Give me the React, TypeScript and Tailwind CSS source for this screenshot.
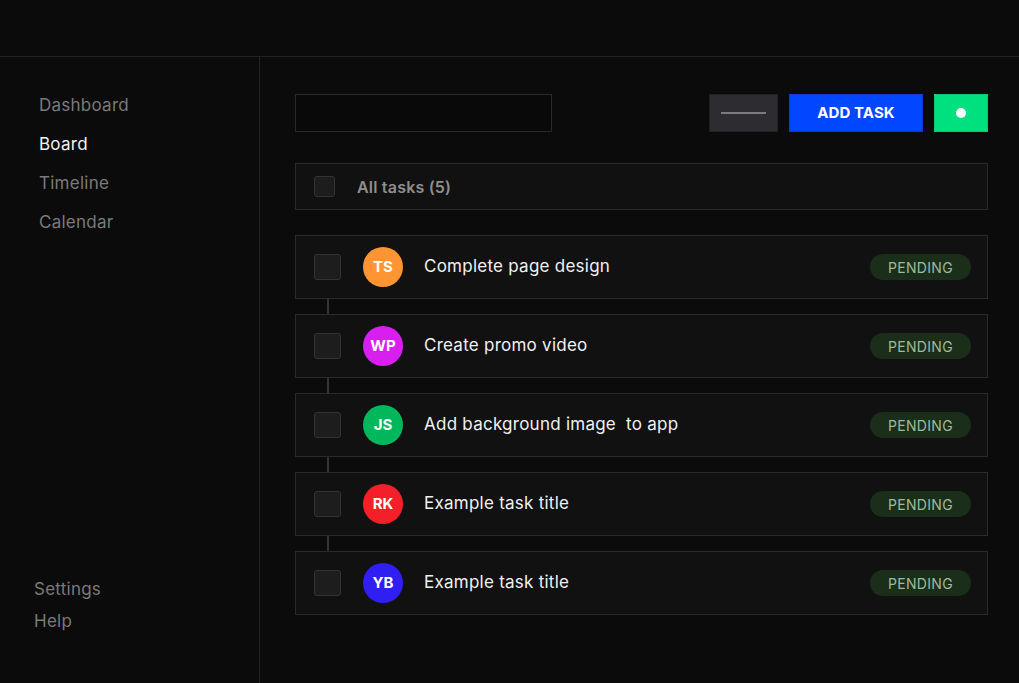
const tasks = [
  { initials: 'TS', color: 'bg-[#ff9433]', title: 'Complete page design' },
  { initials: 'WP', color: 'bg-[#d91ff0]', title: 'Create promo video' },
  { initials: 'JS', color: 'bg-[#00b85c]', title: 'Add background image  to app' },
  { initials: 'RK', color: 'bg-[#f51f2a]', title: 'Example task title' },
  { initials: 'YB', color: 'bg-[#2f1ff5]', title: 'Example task title' },
];

function NavItem({ label, active }: { label: string; active?: boolean }) {
  return (
    <div className={`h-[39px] flex items-center text-[17px] tracking-[0.25px] ${active ? 'text-[#f2f2f2]' : 'text-[#7a7a7a]'}`}>
      {label}
    </div>
  );
}

export default function App() {
  return (
    <div className="w-[1019px] h-[683px] bg-[#0b0b0b] flex flex-col overflow-hidden" style={{ fontFamily: 'Inter, "Noto Sans", sans-serif' }}>
      {/* top bar */}
      <div className="h-[57px] shrink-0 border-b border-[#232323]" />

      <div className="flex flex-1 min-h-0">
        {/* sidebar */}
        <aside className="w-[260px] shrink-0 border-r border-[#232323] flex flex-col justify-between pt-[29px] pb-[45px]">
          <nav className="pl-[39px] flex flex-col">
            <NavItem label="Dashboard" />
            <NavItem label="Board" active />
            <NavItem label="Timeline" />
            <NavItem label="Calendar" />
          </nav>
          <div className="pl-[34px] flex flex-col">
            <div className="h-[32px] flex items-center text-[17px] tracking-[0.25px] text-[#7a7a7a]">Settings</div>
            <div className="h-[32px] flex items-center text-[17px] tracking-[0.25px] text-[#7a7a7a]">Help</div>
          </div>
        </aside>

        {/* main */}
        <main className="flex-1 pl-[35px] pr-[31px] pt-[37px]">
          <div className="flex items-center h-[38px]">
            <div className="w-[257px] h-[38px] border border-[#2a2a2a] bg-[#090909]" />
            <div className="flex-1" />
            <button className="w-[69px] h-[38px] bg-[#2c2c31] border border-[#222226] flex items-center justify-center">
              <span className="block w-[45px] h-[2px] bg-[#7c7c80]" />
            </button>
            <button className="ml-[11px] w-[134px] h-[38px] bg-[#0047ff] border border-[#0a3ad0] text-white font-bold text-[15px] tracking-[0.1px]">
              ADD TASK
            </button>
            <button className="ml-[11px] w-[54px] h-[38px] bg-[#00e07f] border border-[#0cc873] flex items-center justify-center">
              <span className="block w-[10px] h-[10px] rounded-full bg-white" />
            </button>
          </div>

          <div className="mt-[31px] h-[47px] bg-[#111111] border border-[#2a2a2a] flex items-center pl-[18px]">
            <span className="w-[21px] h-[21px] rounded-[3px] bg-[#1d1d1d] border border-[#333]" />
            <span className="ml-[22px] text-[16px] font-semibold tracking-[0.2px] text-[#8e8e8e]">All tasks (5)</span>
          </div>

          <div className="mt-[25px] flex flex-col">
            {tasks.map((t, i) => (
              <div key={i} className="flex flex-col">
                {i > 0 && (
                  <div className="h-[15px] pl-[32px]">
                    <div className="w-[2px] h-full bg-[#333]" />
                  </div>
                )}
                <div className="h-[64px] bg-[#111111] border border-[#2a2a2a] flex items-center pl-[18px] pr-[16px]">
                  <span className="w-[27px] h-[26px] rounded-[3px] bg-[#1d1d1d] border border-[#333]" />
                  <span className={`ml-[22px] w-[40px] h-[40px] rounded-full ${t.color} flex items-center justify-center text-white font-bold text-[15px]`}>
                    {t.initials}
                  </span>
                  <span className="ml-[21px] text-[17px] tracking-[0.25px] text-[#f0f0f0] whitespace-pre">{t.title}</span>
                  <span className="ml-auto w-[101px] h-[26px] rounded-full bg-[#1a2e1a] text-[#9fbb9f] text-[14px] flex items-center justify-center tracking-[0.3px]">
                    PENDING
                  </span>
                </div>
              </div>
            ))}
          </div>
        </main>
      </div>
    </div>
  );
}
